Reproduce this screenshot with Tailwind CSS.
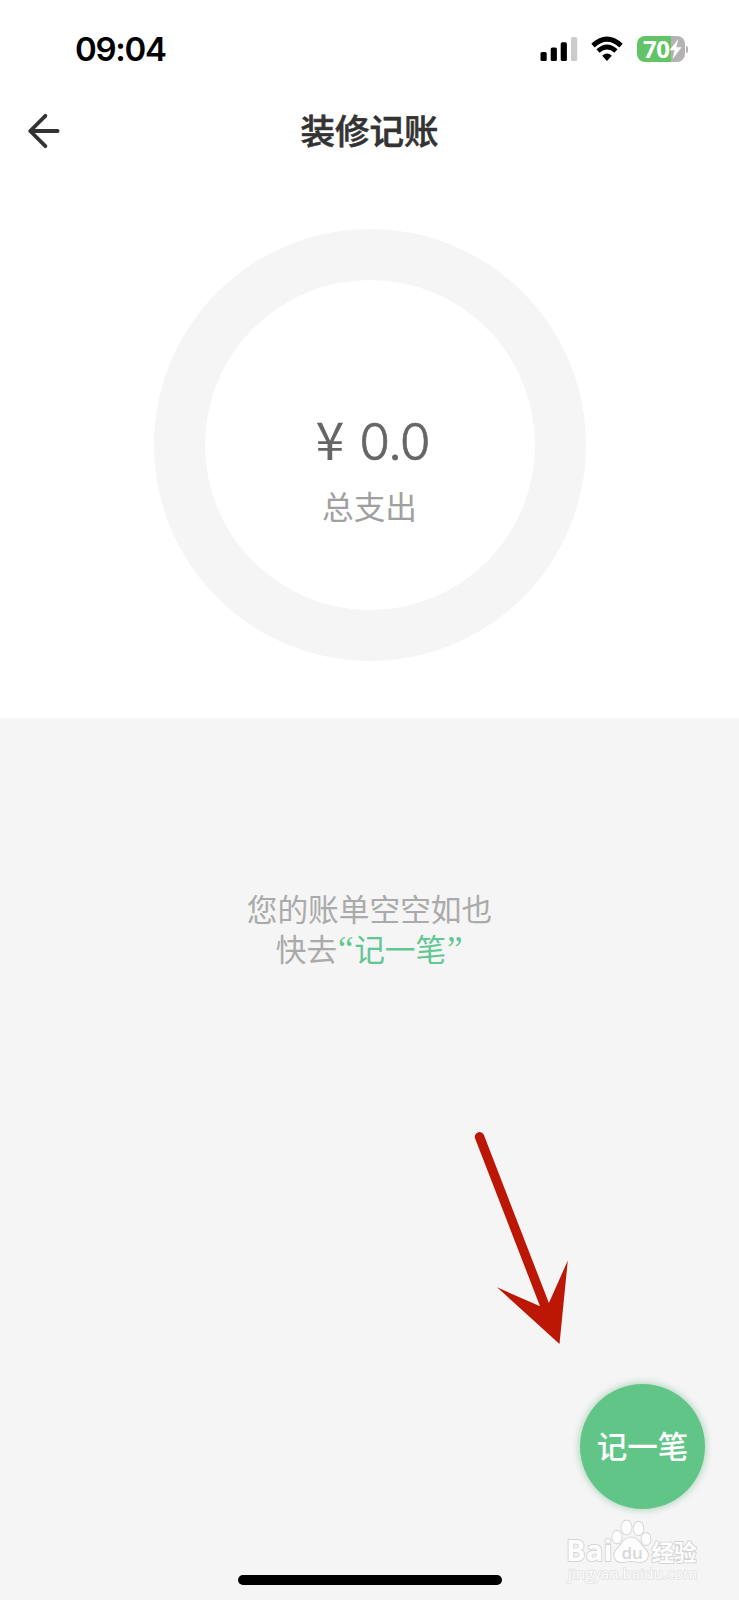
<!DOCTYPE html>
<html lang="zh-CN">
<head>
    <meta charset="UTF-8">
    <meta name="viewport" content="width=device-width, initial-scale=1.0">
    <title>装修记账</title>
    <script src="https://cdn.jsdelivr.net/npm/@tailwindcss/browser@4"></script>
</head>
<body class="bg-[#f5f5f5] font-['Noto_Sans_CJK_SC',sans-serif]">
    <div class="relative w-full h-[1600px] overflow-hidden flex flex-col">
        <div class="bg-white h-[718px] shrink-0 flex flex-col">
            <!-- Status bar -->
            <div class="h-[98px] shrink-0 flex items-center justify-between pl-[75px] pr-[51px]">
                <span class="font-['Inter',sans-serif] font-semibold text-[33px] leading-[40px] text-black tracking-[-1.3px]">09:04</span>
                <div class="flex items-center">
                    <svg class="w-[38px] h-[26px]" viewBox="0 0 38 26">
                        <rect x="0.5" y="16" width="6.2" height="9" rx="1.6" fill="#000"/>
                        <rect x="10.7" y="11.5" width="6.2" height="13.5" rx="1.6" fill="#000"/>
                        <rect x="20.7" y="6.3" width="6.2" height="18.7" rx="1.6" fill="#000"/>
                        <rect x="31" y="1" width="6.2" height="24" rx="1.6" fill="#ccc"/>
                    </svg>
                    <svg class="w-[32px] h-[26px] ml-[13px]" viewBox="0 0 32 26">
                        <path d="M2 9.6 Q16 -3.2 30 9.6" fill="none" stroke="#000" stroke-width="5"/>
                        <path d="M7 15 Q16 7 25 15" fill="none" stroke="#000" stroke-width="4.6"/>
                        <path d="M11.2 19.8 Q16 15.4 20.8 19.8 L16 25 Z" fill="#000"/>
                    </svg>
                    <div class="relative flex items-center ml-[14px] w-[48px] h-[26px] rounded-[8px] bg-linear-to-r from-[#62c466] from-[71%] to-[#b3b3b3] to-[71%]">
                        <span class="pl-[6px] font-['Noto_Sans',sans-serif] font-bold text-[24px] leading-[32px] -my-[3px] tracking-[-0.6px] text-white">70</span>
                        <svg class="absolute left-[32px] top-[3px] w-[13px] h-[20px]" viewBox="0 0 13 20">
                            <path d="M9.3 0 L0.5 11.2 H5.6 L3.6 20 L12.6 8.2 H7.3 Z" fill="#fff"/>
                        </svg>
                    </div>
                    <div class="w-[2px] h-[7px] ml-[1px] rounded-r-full bg-[#b3b3b3]"></div>
                </div>
            </div>

            <!-- Title -->
            <div class="h-[66px] shrink-0 grid grid-cols-3 items-center">
                <svg class="w-[34px] h-[36px] ml-[27px]" viewBox="0 0 34 36" fill="none" stroke="#333" stroke-width="3.8" stroke-linecap="round" stroke-linejoin="round">
                    <path d="M18.4 2.8 L3.2 18 L18.4 33.2 M3.2 18 H30.6"/>
                </svg>
                <h1 class="pb-[4px] text-center font-medium text-[34.5px] leading-[50px] whitespace-nowrap text-[#333] [-webkit-text-stroke:0.6px_#333]">装修记账</h1>
            </div>

            <!-- Total ring -->
            <div class="mt-[65px] mx-auto w-[432px] h-[432px] rounded-full border-[51px] border-[#f5f5f5] flex flex-col items-center">
                <div class="mt-[132px] h-[60px] pl-[6px] flex items-center text-[#666]">
                    <span class="pb-[9px] text-[52px] leading-[60px]">¥</span>
                    <span class="ml-[15px] font-['Inter',sans-serif] font-light text-[50px] leading-[60px] tracking-[-1px] [-webkit-text-stroke:0.6px_#666]">0.0</span>
                </div>
                <div class="mt-[10px] text-[31.7px] leading-[46px] text-[#a0a0a0]">总支出</div>
            </div>
        </div>

        <!-- Empty state -->
        <div class="mt-[169px] text-center text-[30.7px] leading-[41px] text-[#aaa]">
            <p>您的账单空空如也</p>
            <p class="-mt-px">快去<span class="text-[#62c794]"><span class="inline-block w-[17px] text-center font-['Liberation_Serif',serif] text-[35px] leading-none">“</span>记一笔<span class="inline-block w-[17px] text-center font-['Liberation_Serif',serif] text-[35px] leading-none">”</span></span></p>
        </div>

        <svg class="absolute left-[460px] top-[1120px] w-[130px] h-[240px]" viewBox="0 0 130 240">
            <path d="M19.5 16.8 L85 186" stroke="#bb1704" stroke-width="9.4" stroke-linecap="round"/>
            <path d="M37 167.3 L79.5 186 L89 182.8 L107.8 140.5 L99.5 224 Z" fill="#bb1704"/>
        </svg>

        <button class="absolute left-[580px] top-[1384px] w-[125px] h-[125px] pb-[3px] rounded-full bg-[#62c588] shadow-[0_0_6px_2px_rgba(80,170,115,0.35)] text-white text-[30.5px] font-medium leading-[44px]">记一笔</button>

        <!-- Watermark -->
        <svg class="absolute left-[560px] top-[1512px] w-[145px] h-[78px]" viewBox="0 0 145 78" fill="#fdfdfd" stroke="#d4d4d4" stroke-width="1.8" stroke-linejoin="round" paint-order="stroke">
            <text x="6" y="49" font-family="Open Sans" font-weight="700" font-size="29" letter-spacing="0.2">Bai</text>
            <ellipse cx="57" cy="25" rx="4.7" ry="6.3"/>
            <ellipse cx="66.5" cy="15.5" rx="5" ry="7"/>
            <ellipse cx="78.5" cy="16.5" rx="4.8" ry="6.8"/>
            <ellipse cx="86" cy="27" rx="4.5" ry="6"/>
            <path d="M71 25.5 C78 25.5 80 32 84 36 C91 42 88 50 80 50 C76 50 74 49 71 49 C68 49 66 50 62 50 C54 50 52 42 57 37 C62 33 64 25.5 71 25.5 Z"/>
            <text x="61.5" y="47" font-family="Open Sans" font-weight="600" font-size="17" fill="#d8d8d8" stroke="none">du</text>
            <text x="91.5" y="48.5" font-family="Noto Sans CJK SC" font-weight="700" font-size="22.6">经验</text>
            <text x="8" y="66.5" font-family="Open Sans" font-size="15.2" stroke="#e0e0e0" stroke-width="1.4">jingyan.baidu.com</text>
        </svg>

        <div class="absolute left-[238px] bottom-[15px] w-[264px] h-[10px] rounded-full bg-black"></div>
    </div>
</body>
</html>
